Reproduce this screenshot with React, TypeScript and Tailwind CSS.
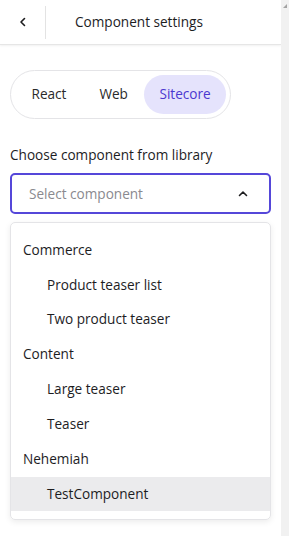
import React from 'react';

const groups = [
  { name: 'Commerce', items: ['Product teaser list', 'Two product teaser'] },
  { name: 'Content', items: ['Large teaser', 'Teaser'] },
  { name: 'Nehemiah', items: ['TestComponent'] },
];

const tabs = ['React', 'Web', 'Sitecore'];

export default function App() {
  const active = 'Sitecore';
  const hovered = 'TestComponent';

  return (
    <div className="flex h-[536px] w-[289px] bg-white text-[#1d1d1f] [font-family:'Open_Sans',sans-serif]">
      <div className="flex min-w-0 flex-1 flex-col">
        {/* header */}
        <div className="flex h-[45px] items-center border-b border-[#e6e6e6] shadow-[0_1px_2px_rgba(0,0,0,0.06)]">
          <button className="flex h-[33px] w-[46px] items-center justify-center border-r border-[#e3e3e3]">
            <svg width="12" height="12" viewBox="0 0 12 12" fill="none">
              <path d="M7.5 2.5 4 6l3.5 3.5" stroke="#1d1d1f" strokeWidth="1.6" strokeLinecap="round" strokeLinejoin="round" />
            </svg>
          </button>
          <h1 className="pl-[29px] text-[13.6px] font-medium">Component settings</h1>
        </div>

        <div className="px-[10px] pt-[25px]">
          {/* segmented control */}
          <div className="inline-flex h-[49px] items-center rounded-full border border-[#e4e4e7] px-[4px]">
            {tabs.map((t) => (
              <button
                key={t}
                className={
                  t === active
                    ? 'h-[39px] rounded-full bg-[#e5e3fc] px-[15px] text-[13.6px] text-[#4b38d0]'
                    : 'h-[39px] rounded-full px-[16.5px] text-[13.6px] text-[#2a2a2a]'
                }
              >
                {t}
              </button>
            ))}
          </div>

          <label className="mt-[26px] block text-[13.6px] font-medium">Choose component from library</label>

          {/* select */}
          <div className="mt-[8px] flex h-[41px] items-center justify-between rounded-[5px] border-2 border-[#5547d9] pl-[17px] pr-[20px]">
            <span className="text-[13.6px] text-[#8a8a8f]">Select component</span>
            <svg width="12" height="12" viewBox="0 0 12 12" fill="none">
              <path d="M2.5 7.5 6 4l3.5 3.5" stroke="#1d1d1f" strokeWidth="1.6" strokeLinecap="round" strokeLinejoin="round" />
            </svg>
          </div>

          {/* dropdown */}
          <div className="mt-[8px] rounded-[5px] border border-[#e4e4e7] pb-[8px] pt-[9px] shadow-[0_2px_6px_rgba(0,0,0,0.08)]">
            {groups.map((g) => (
              <div key={g.name}>
                <div className="flex h-[35px] items-center pl-[12px] text-[13.6px] font-medium">{g.name}</div>
                {g.items.map((i) => (
                  <div
                    key={i}
                    className={
                      'flex h-[34.8px] items-center pl-[36px] text-[13.6px] ' + (i === hovered ? 'bg-[#ebebed]' : '')
                    }
                  >
                    {i}
                  </div>
                ))}
              </div>
            ))}
          </div>
        </div>
      </div>

      {/* scrollbar */}
      <div className="flex w-[8px] flex-col items-center bg-[#f1f1f1] pt-[4px]">
        <svg width="5" height="4" viewBox="0 0 5 4">
          <path d="M0 4 4 0v4z" fill="#a3a3a3" />
        </svg>
      </div>
    </div>
  );
}
